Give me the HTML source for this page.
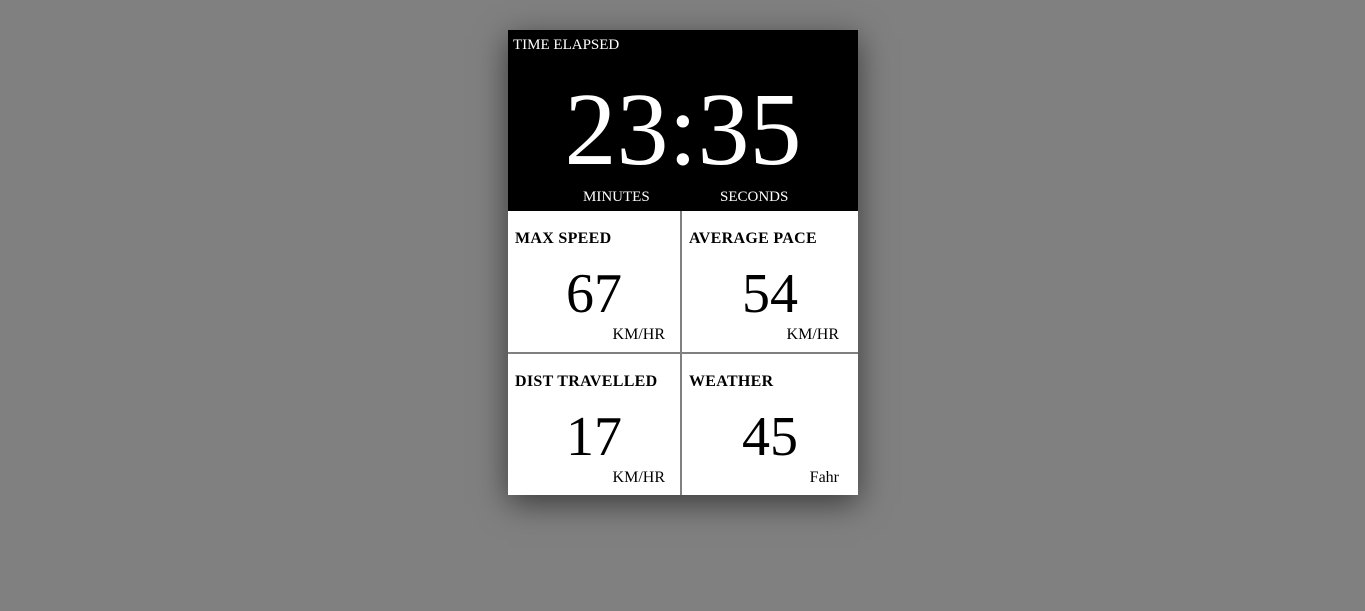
<!DOCTYPE html>
<html><head><style>
html,body{margin:0;padding:0;}
body{width:1365px;height:611px;background:#808080;position:relative;overflow:hidden;font-family:"Liberation Serif",serif;}
.card{position:absolute;left:508px;top:30px;width:350px;height:465px;background:#808080;box-shadow:0 8px 30px rgba(0,0,0,0.55);}
.top{position:absolute;left:0;top:0;width:350px;height:181px;background:#000;color:#fff;}
.lbl{position:absolute;font-size:15px;color:#fff;}
.big{position:absolute;left:0;width:350px;text-align:center;top:48px;font-size:104px;line-height:104px;color:#fff;}
.cell{position:absolute;background:#fff;color:#000;}
.ct{position:absolute;left:7px;top:19px;font-size:16px;font-weight:bold;letter-spacing:0.3px;}
.cn{position:absolute;left:0;right:0;text-align:center;top:55px;font-size:56px;line-height:56px;}
.cu{position:absolute;right:15px;top:115px;font-size:16px;}
</style></head><body>
<div class="card">
 <div class="top">
  <div class="lbl" style="left:5px;top:7px;">TIME ELAPSED</div>
  <div class="big">23:35</div>
  <div class="lbl" style="left:75px;top:159px;">MINUTES</div>
  <div class="lbl" style="left:212px;top:159px;">SECONDS</div>
 </div>
 <div class="cell" style="left:0;top:181px;width:172px;height:141px;"><div class="ct">MAX SPEED</div><div class="cn">67</div><div class="cu">KM/HR</div></div>
 <div class="cell" style="left:174px;top:181px;width:176px;height:141px;"><div class="ct">AVERAGE PACE</div><div class="cn">54</div><div class="cu" style="right:19px">KM/HR</div></div>
 <div class="cell" style="left:0;top:324px;width:172px;height:141px;"><div class="ct">DIST TRAVELLED</div><div class="cn">17</div><div class="cu">KM/HR</div></div>
 <div class="cell" style="left:174px;top:324px;width:176px;height:141px;"><div class="ct">WEATHER</div><div class="cn">45</div><div class="cu" style="right:19px">Fahr</div></div>
</div>
</body></html>
